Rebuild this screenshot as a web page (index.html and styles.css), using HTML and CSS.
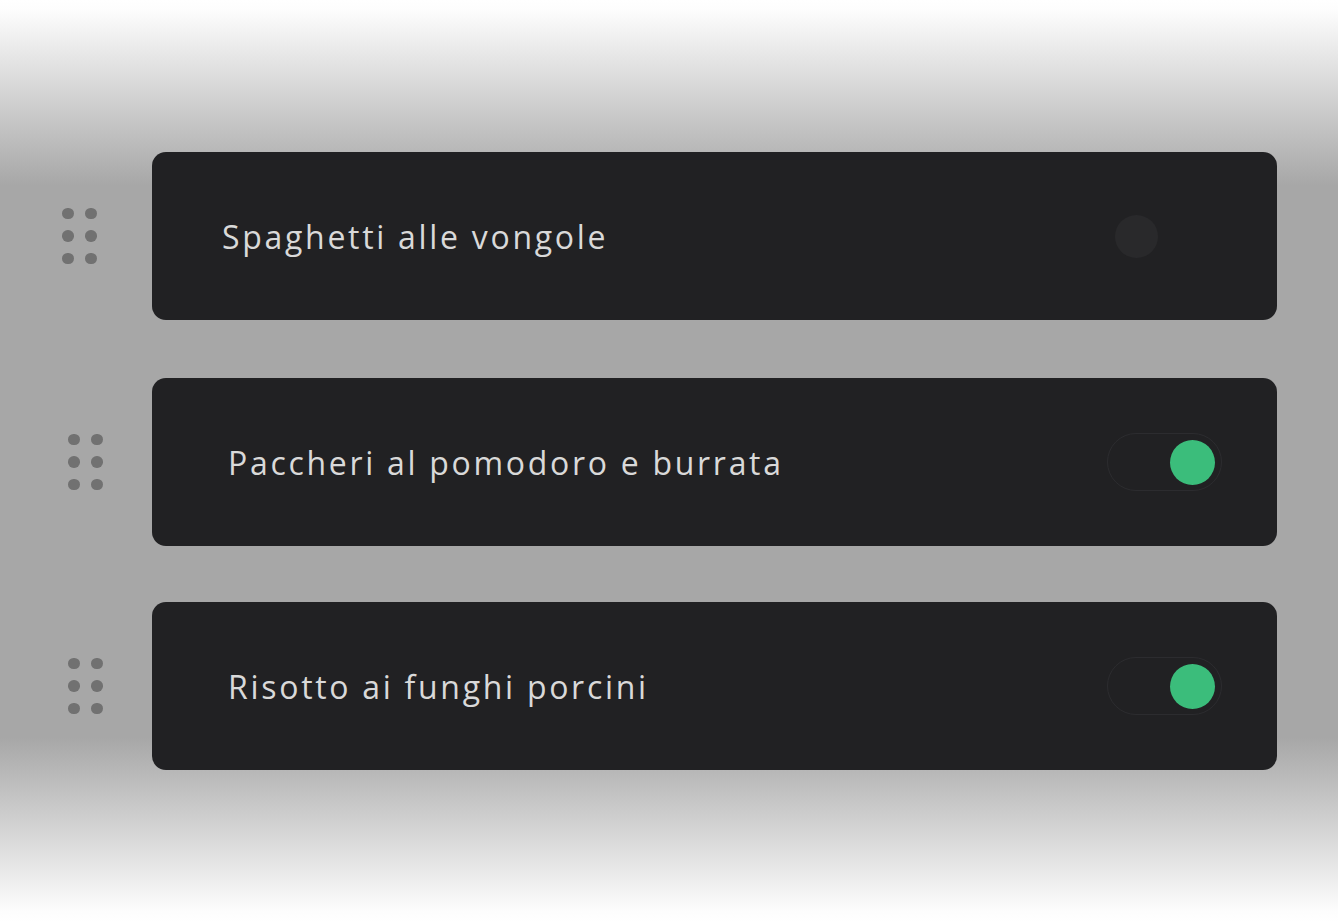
FILE: index.html
```html
<!DOCTYPE html>
<html lang="it">
<head>
    <meta charset="UTF-8">
    <meta name="viewport" content="width=device-width, initial-scale=1.0">
    <title>Menu del giorno</title>
    <link rel="stylesheet" href="styles.css">
</head>
<body>
    <div class="dish-list">
        <!-- riga trascinata: leggermente spostata a sinistra -->
        <div class="dish-row dish-row-dragging">
            <div class="drag-handle">
                <span></span><span></span>
                <span></span><span></span>
                <span></span><span></span>
            </div>
            <div class="dish-card">
                <div class="dish-name">Spaghetti alle vongole</div>
                <div class="toggle"><div class="toggle-knob"></div></div>
            </div>
        </div>

        <div class="dish-row">
            <div class="drag-handle">
                <span></span><span></span>
                <span></span><span></span>
                <span></span><span></span>
            </div>
            <div class="dish-card">
                <div class="dish-name">Paccheri al pomodoro e burrata</div>
                <div class="toggle on"><div class="toggle-knob"></div></div>
            </div>
        </div>

        <div class="dish-row">
            <div class="drag-handle">
                <span></span><span></span>
                <span></span><span></span>
                <span></span><span></span>
            </div>
            <div class="dish-card">
                <div class="dish-name">Risotto ai funghi porcini</div>
                <div class="toggle on"><div class="toggle-knob"></div></div>
            </div>
        </div>
    </div>
</body>
</html>
```

FILE: styles.css
```css
html, body {
    margin: 0;
    height: 100%;
}
body {
    font-family: "Open Sans", "DejaVu Sans", sans-serif;
    background: linear-gradient(to bottom,
        #ffffff 0px,
        #fdfdfd 10px,
        #a7a7a7 185px,
        #a7a7a7 738px,
        #fdfdfd 912px,
        #ffffff 922px);
    min-height: 922px;
}
.dish-list {
    display: flex;
    flex-direction: column;
    padding-top: 152px;
    width: 1277px;
}
.dish-row {
    display: flex;
    align-items: center;
    margin-top: 56px;
}
.dish-row:first-child {
    margin-top: 0;
}
.dish-row-dragging {
    margin-bottom: 2px;
}
.drag-handle {
    width: 84px;
    padding-left: 68px;
    display: grid;
    grid-template-columns: 11.5px 11.5px;
    column-gap: 11.5px;
    row-gap: 11px;
}
.drag-handle span {
    width: 11.5px;
    height: 11.5px;
    border-radius: 50%;
    background: #717171;
}
.dish-card {
    flex: 1;
    height: 168px;
    box-sizing: border-box;
    padding: 0 55px 0 76px;
    background: #212123;
    border-radius: 14px;
    display: flex;
    align-items: center;
    justify-content: space-between;
}
.dish-row-dragging .drag-handle {
    padding-left: 62px;
    width: 90px;
}
.dish-row-dragging .dish-card {
    padding-left: 70px;
}
.dish-name {
    color: #d9d9d9;
    font-size: 32px;
    letter-spacing: 2.7px;
}
.toggle {
    width: 115px;
    height: 58px;
    box-sizing: border-box;
    border: 1.5px solid transparent;
    border-radius: 29px;
    padding: 0 6px 0 7px;
    display: flex;
    align-items: center;
}
.toggle-knob {
    width: 43px;
    height: 43px;
    border-radius: 50%;
    background: #29292b;
}
.toggle.on {
    border-color: #2c2c2f;
    justify-content: flex-end;
}
.toggle.on .toggle-knob {
    width: 45px;
    height: 45px;
    background: #3bbd7b;
}
```
